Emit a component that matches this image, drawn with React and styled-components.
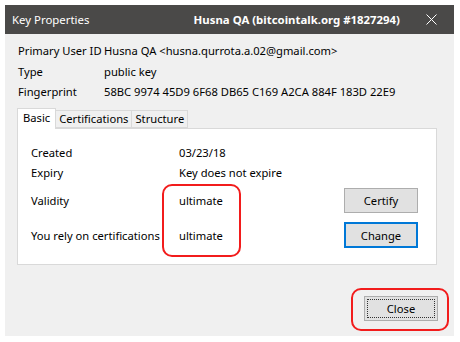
import React from "react";
import styled, { createGlobalStyle } from "styled-components";

const Global = createGlobalStyle`
  html, body { margin: 0; padding: 0; background: #ffffff; }
  body { font-family: "Segoe UI", "Noto Sans", "Liberation Sans", sans-serif; font-size: 11.2px; color: #000; }
`;

const Page = styled.div`
  padding: 5px;
`;

const Window = styled.div`
  width: 449px;
  height: 331px;
  background: #f0f0f0;
  display: flex;
  flex-direction: column;
`;

const TitleBar = styled.div`
  height: 29px;
  flex: none;
  background: #4a4948;
  color: #fff;
  display: flex;
  align-items: center;
  padding-left: 7px;
  font-size: 11.4px;
`;

const TitleText = styled.span`
  flex: 1;
`;

const TitleBold = styled.span`
  font-weight: bold;
  margin-right: 12px;
`;

const CloseX = styled.div`
  width: 38px;
  height: 29px;
  display: flex;
  align-items: center;
  justify-content: center;
  padding-right: 4px;
`;

const Body = styled.div`
  padding: 9px 12px 0 12px;
  display: flex;
  flex-direction: column;
  flex: 1;
  position: relative;
`;

const InfoGrid = styled.div`
  display: grid;
  grid-template-columns: 86px auto;
  row-gap: 4px;
  padding-left: 1px;
  line-height: 16.5px;
  white-space: nowrap;
`;

const Tabs = styled.div`
  margin-top: 6px;
  display: flex;
  align-items: flex-end;
  height: 21px;
`;

const Tab = styled.div`
  height: ${(p) => (p.$active ? "21px" : "18px")};
  padding: 0 ${(p) => (p.$active ? 5 : 3)}px;
  box-sizing: border-box;
  border: 1px solid #d9d9d9;
  border-bottom: ${(p) => (p.$active ? "none" : "1px solid #d9d9d9")};
  background: ${(p) => (p.$active ? "#ffffff" : "#f0f0f0")};
  margin-left: ${(p) => (p.$active ? "0" : "-1px")};
  display: flex;
  align-items: ${(p) => (p.$active ? "flex-start" : "center")};
  line-height: 17px;
  position: relative;
  z-index: ${(p) => (p.$active ? 2 : 1)};
  margin-bottom: ${(p) => (p.$active ? "-1px" : "0")};
`;

const Panel = styled.div`
  width: 420px;
  height: 137px;
  box-sizing: border-box;
  background: #fff;
  border: 1px solid #d9d9d9;
  position: relative;
  padding: 14px 18px 0 13px;
`;

const PanelGrid = styled.div`
  display: grid;
  grid-template-columns: 148px 1fr 74px;
  align-items: center;
`;

const Cell = styled.div`
  height: ${(p) => p.$h || 20}px;
  display: flex;
  align-items: center;
  white-space: nowrap;
`;

const Button = styled.div`
  box-sizing: border-box;
  width: 74px;
  height: ${(p) => (p.$focus ? 26 : 25)}px;
  background: #e1e1e1;
  border: ${(p) => (p.$focus ? "2px solid #0078d7" : "1px solid #adadad")};
  display: flex;
  align-items: center;
  justify-content: center;
  position: relative;
`;

const DottedFocus = styled.div`
  position: absolute;
  inset: 2px;
  border: 1px dotted #333;
`;

const Highlight = styled.div`
  position: absolute;
  border: 2px solid #f21c1c;
  border-radius: 10px;
  box-sizing: border-box;
  left: ${(p) => p.$l}px;
  top: ${(p) => p.$t}px;
  width: ${(p) => p.$w}px;
  height: ${(p) => p.$h}px;
`;

const Footer = styled.div`
  display: flex;
  justify-content: flex-end;
  padding-top: 31px;
  padding-right: 4px;
`;

export default function App() {
  return (
    <>
      <Global />
      <Page>
        <Window>
          <TitleBar>
            <TitleText>Key Properties</TitleText>
            <TitleBold>Husna QA (bitcointalk.org #1827294)</TitleBold>
            <CloseX>
              <svg width="11" height="11" viewBox="0 0 11 11">
                <path d="M0.5 0.5 L10.5 10.5 M10.5 0.5 L0.5 10.5" stroke="#fff" strokeWidth="1" />
              </svg>
            </CloseX>
          </TitleBar>
          <Body>
            <InfoGrid>
              <span>Primary User ID</span>
              <span>Husna QA &lt;husna.qurrota.a.02@gmail.com&gt;</span>
              <span>Type</span>
              <span>public key</span>
              <span>Fingerprint</span>
              <span>58BC 9974 45D9 6F68 DB65 C169 A2CA 884F 183D 22E9</span>
            </InfoGrid>
            <Tabs>
              <Tab $active>Basic</Tab>
              <Tab>Certifications</Tab>
              <Tab>Structure</Tab>
            </Tabs>
            <Panel>
              <PanelGrid>
                <Cell>Created</Cell>
                <Cell>03/23/18</Cell>
                <Cell />
                <Cell>Expiry</Cell>
                <Cell>Key does not expire</Cell>
                <Cell />
                <Cell $h={35}>Validity</Cell>
                <Cell $h={35}>ultimate</Cell>
                <Cell $h={35}>
                  <Button>Certify</Button>
                </Cell>
                <Cell $h={35}>You rely on certifications</Cell>
                <Cell $h={35}>ultimate</Cell>
                <Cell $h={35}>
                  <Button $focus>Change</Button>
                </Cell>
              </PanelGrid>
              <Highlight $l={144} $t={55} $w={79} $h={73} />
            </Panel>
            <Footer>
              <Button>
                <DottedFocus />
                Close
              </Button>
            </Footer>
            <Highlight $l={346} $t={254} $w={98} $h={43} />
          </Body>
        </Window>
      </Page>
    </>
  );
}
